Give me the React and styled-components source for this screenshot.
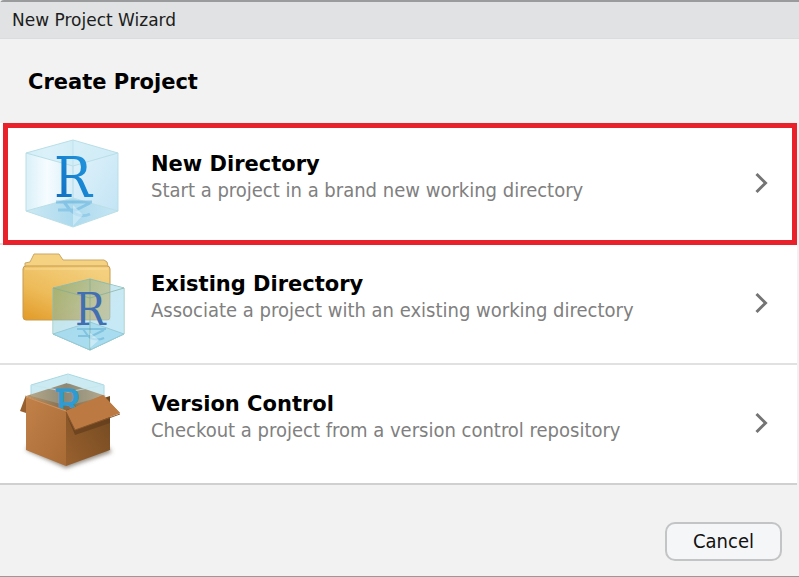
import React from "react";
import styled, { createGlobalStyle } from "styled-components";

const GlobalStyle = createGlobalStyle`
  * { box-sizing: border-box; }
  body {
    margin: 0;
    background: #f2f2f2;
    font-family: "DejaVu Sans", sans-serif;
    color: #000;
  }
`;

const Dialog = styled.main`
  display: flex;
  flex-direction: column;
  min-height: 100vh;
  border-top: 2px solid #999b9c;
  border-bottom: 1px solid #999;
  border-top-left-radius: 4px;
  background: #f2f2f2;
`;

const TitleBar = styled.header`
  padding: 8px 12px;
  background: #e0e2e3;
  border-bottom: 1px solid #dadcdd;
  font-size: 17px;
  line-height: 20px;
  color: #1c1c1c;
`;

const Heading = styled.h1`
  margin: 0;
  padding: 31px 28px 28px;
  font-size: 21px;
  line-height: 25px;
  font-weight: 700;
`;

const Options = styled.ul`
  margin: 0 2px 0 0;
  padding: 0;
  list-style: none;
  background: #fff;
  border-bottom: 2px solid #d0d0d0;
`;

const OptionItem = styled.li`
  position: relative;
  & + & { border-top: 2px solid #e1e1e1; }
`;

const Highlight = styled.span`
  position: absolute;
  inset: 0 0 -2px 3px;
  border: 5px solid #e9212b;
  pointer-events: none;
  z-index: 1;
`;

const OptionButton = styled.button`
  display: grid;
  grid-template-columns: 112px 1fr 24px;
  column-gap: 23px;
  align-items: center;
  width: 100%;
  height: ${(p) => (p.$first ? "120px" : "118px")};
  padding: ${(p) => (p.$first ? "0 22px 0 16px" : "0 22px 2px 16px")};
  border: 0;
  background: transparent;
  font-family: inherit;
  text-align: left;
  color: inherit;
`;

const Label = styled.span`
  display: flex;
  flex-direction: column;
  padding-bottom: 12px;
`;

const Name = styled.span`
  font-size: 21px;
  line-height: 26px;
  font-weight: 700;
`;

const Description = styled.span`
  font-family: "DejaVu Sans Condensed", "DejaVu Sans", sans-serif;
  font-stretch: condensed;
  font-size: 20px;
  line-height: 26px;
  color: #808080;
`;

const Footer = styled.footer`
  display: flex;
  justify-content: flex-end;
  padding: 37px 17px 15px;
`;

const CancelButton = styled.button`
  width: 117px;
  height: 39px;
  padding: 0 0 2px;
  border: 2px solid #c2c4c5;
  border-radius: 10px;
  background: #f5f6f7;
  font-family: "DejaVu Sans Condensed", "DejaVu Sans", sans-serif;
  font-stretch: condensed;
  font-size: 20px;
  line-height: 24px;
  color: #111;
`;

const Art = styled.svg`
  display: block;
  width: 112px;
  height: 112px;
`;

const Letter = styled.text`
  font-family: "DejaVu Serif Condensed", "DejaVu Serif", serif;
  font-stretch: condensed;
  font-size: ${(p) => p.$size}px;
`;

function Chevron() {
  return (
    <svg width="24" height="24" viewBox="0 0 24 24" fill="none" stroke="#747474" strokeWidth="3" aria-hidden="true">
      <path d="M5.5 3 L14.5 12 L5.5 21" />
    </svg>
  );
}

function CubeIcon() {
  return (
    <Art viewBox="0 -1 112 112" aria-hidden="true">
      <defs>
        <linearGradient id="cubeLeft" x1="0" x2="1">
          <stop offset="0" stopColor="#daf0f8" /><stop offset="0.45" stopColor="#f6fcff" /><stop offset="1" stopColor="#d7eef8" />
        </linearGradient>
        <linearGradient id="cubeRight" x1="0" x2="1" y1="0" y2="1">
          <stop offset="0" stopColor="#e4f4fb" /><stop offset="1" stopColor="#c3e4f5" />
        </linearGradient>
        <linearGradient id="cubeFloor" x1="0" x2="1">
          <stop offset="0" stopColor="#cde9f4" /><stop offset="0.5" stopColor="#acdaee" /><stop offset="1" stopColor="#c6e6f4" />
        </linearGradient>
        <linearGradient id="cubeLetter" x1="0" y1="1" x2="1" y2="0">
          <stop offset="0" stopColor="#1265b8" /><stop offset="0.5" stopColor="#1784d2" /><stop offset="1" stopColor="#299de1" />
        </linearGradient>
        <linearGradient id="cubeReflection" gradientUnits="userSpaceOnUse" x1="0" y1="72" x2="0" y2="88">
          <stop offset="0" stopColor="#4fa6da" stopOpacity=".5" /><stop offset="1" stopColor="#4fa6da" stopOpacity=".3" />
        </linearGradient>
      </defs>
      <path d="M10 25 L57 12 V70 L10 83Z" fill="url(#cubeLeft)" />
      <path d="M57 12 L102 25 V83 L57 70Z" fill="url(#cubeRight)" />
      <path d="M10 83 L57 70 L102 83 L57 99Z" fill="url(#cubeFloor)" />
      <path d="M10 25 L57 12 L102 25 L57 38Z" fill="#d0edf6" fillOpacity=".7" />
      <path d="M57 38 V99 M57 12 V70" stroke="#acd8e6" strokeOpacity=".5" fill="none" />
      <path d="M10 25 L57 12 L102 25 V83 L57 99 L10 83Z M10 25 L57 38 L102 25 M10 83 L57 70 L102 83" stroke="#b9dfe7" fill="none" />
      <path d="M40 74 H76 M48 74 L54 82 M74 75 L60 82 H42 M54 82 Q64 91 74 86" stroke="url(#cubeReflection)" strokeWidth="3" fill="none" />
      <path d="M57 77 L67 87 L57 98Z" fill="#e4f6fd" fillOpacity=".5" />
      <Letter x="38" y="69" $size={56} fill="url(#cubeLetter)">R</Letter>
    </Art>
  );
}

function FolderIcon() {
  return (
    <Art viewBox="0 4 112 112" aria-hidden="true">
      <defs>
        <linearGradient id="folderFace" x1="0" y1="1" x2="0.7" y2="0">
          <stop offset="0" stopColor="#e29a27" /><stop offset="0.45" stopColor="#edbb59" /><stop offset="1" stopColor="#f3cf7e" />
        </linearGradient>
        <linearGradient id="glassFace" x1="0" y1="0" x2="1" y2="1">
          <stop offset="0" stopColor="#73a46f" stopOpacity=".6" /><stop offset=".55" stopColor="#99cadc" stopOpacity=".55" /><stop offset="1" stopColor="#a9dcf0" stopOpacity=".75" />
        </linearGradient>
      </defs>
      <path d="M9 26 V20 L14 19 L18 11 H43 L47 17 H88 Q92 18 92 23 V26Z" fill="#f5d282" stroke="#caa763" />
      <path d="M7 26 Q7 23 10 23 H91 Q94 23 94 26 V74 Q94 77 91 77 H10 Q7 77 7 74Z" fill="url(#folderFace)" stroke="#c79b51" />
      <path d="M9 26 H92" stroke="#ffe4a3" strokeOpacity=".7" />
      <path d="M37 45 L74 36 L108 45 V91 L74 107 L37 91Z" fill="url(#glassFace)" stroke="#8bbdb2" />
      <path d="M94.500 41.500 L108 45 V91 L74 107 L37 91 V77.500 H94.500Z" fill="#c9edf9" fillOpacity=".65" />
      <path d="M37 91 L74 79 L108 91 L74 107Z" fill="#83cce8" fillOpacity=".45" stroke="#97cbd7" />
      <path d="M37 45 L74 55 L108 45 M74 36 V107" stroke="#7cab95" strokeOpacity=".65" fill="none" />
      <path d="M61 86 H90 M67 86 L72 93 M88 87 L76 93 H62 M72 93 Q79 99 88 95" stroke="#479cc8" strokeOpacity=".4" strokeWidth="2" fill="none" />
      <path d="M74 90 L83 97 L74 105Z" fill="#e9faff" fillOpacity=".5" />
      <Letter x="59" y="82" $size={45} fill="#426fb2">R</Letter>
    </Art>
  );
}

function BoxIcon() {
  return (
    <Art viewBox="0 3 112 112" aria-hidden="true">
      <defs>
        <linearGradient id="boxLeft" x1="0" y1="0" x2="1" y2="1">
          <stop offset="0" stopColor="#c28149" /><stop offset="1" stopColor="#a96b35" />
        </linearGradient>
        <linearGradient id="boxRight" x1="0" y1="1" x2="1" y2="0">
          <stop offset="0" stopColor="#99602e" /><stop offset="1" stopColor="#704820" />
        </linearGradient>
        <linearGradient id="boxInside" x1="0" x2="1">
          <stop offset="0" stopColor="#b9996e" /><stop offset=".5" stopColor="#7f6c50" /><stop offset="1" stopColor="#b49973" />
        </linearGradient>
        <filter id="boxShadow" x="-20%" y="-20%" width="140%" height="150%"><feGaussianBlur stdDeviation="2" /></filter>
      </defs>
      <path d="M10 86 L50 104 L96 88 L89 80 L15 78Z" fill="#65584c" fillOpacity=".7" filter="url(#boxShadow)" />
      <path d="M15 21 L52 10 L88 21 V32 L52 42 L15 32Z" fill="#d3eef5" stroke="#a8d8e2" />
      <path d="M10 32 L51 19 L90 32 L50 48Z" fill="url(#boxInside)" />
      <path d="M15 21 L52 10 L88 21 V32 L52 42 L15 32Z" fill="#b9dfe7" fillOpacity=".25" />
      <path d="M15 21 L52 28 L88 21 M52 10 V20" stroke="#c4e6ec" strokeOpacity=".8" fill="none" />
      <Letter x="38" y="55" $size={41} fill="#2e9bd2" stroke="#2e9bd2" strokeWidth="1">R</Letter>
      <path d="M10 32 L50 46 V102 L10 86Z" fill="url(#boxLeft)" />
      <path d="M50 46 L94 32 V86 L50 102Z" fill="url(#boxRight)" />
      <path d="M50 47 L87 31 L104 49 L59 66Z" fill="#bc7a42" />
      <path d="M51 52 L59 66 L94 54 V59 L59 71Z" fill="#5c3919" fillOpacity=".6" />
      <path d="M50 47 L87 31 L104 49 L59 66Z" fill="#bc7a42" />
      <path d="M50 48 L59 66 L104 50" stroke="#88562d" fill="none" />
      <path d="M10 31 L4 47 L10 49Z" fill="#98602f" />
      <path d="M10 33 L50 47" stroke="#cb9462" />
    </Art>
  );
}

const options = [
  { name: "New Directory", text: "Start a project in a brand new working directory", Icon: CubeIcon, selected: true },
  { name: "Existing Directory", text: "Associate a project with an existing working directory", Icon: FolderIcon },
  { name: "Version Control", text: "Checkout a project from a version control repository", Icon: BoxIcon },
];

export default function App() {
  return (
    <>
      <GlobalStyle />
      <Dialog>
        <TitleBar>New Project Wizard</TitleBar>
        <Heading>Create Project</Heading>
        <Options>
          {options.map(({ name, text, Icon, selected }, i) => (
            <OptionItem key={name}>
              {selected && <Highlight />}
              <OptionButton type="button" $first={i === 0}>
                <Icon />
                <Label>
                  <Name>{name}</Name>
                  <Description>{text}</Description>
                </Label>
                <Chevron />
              </OptionButton>
            </OptionItem>
          ))}
        </Options>
        <Footer>
          <CancelButton type="button">Cancel</CancelButton>
        </Footer>
      </Dialog>
    </>
  );
}
